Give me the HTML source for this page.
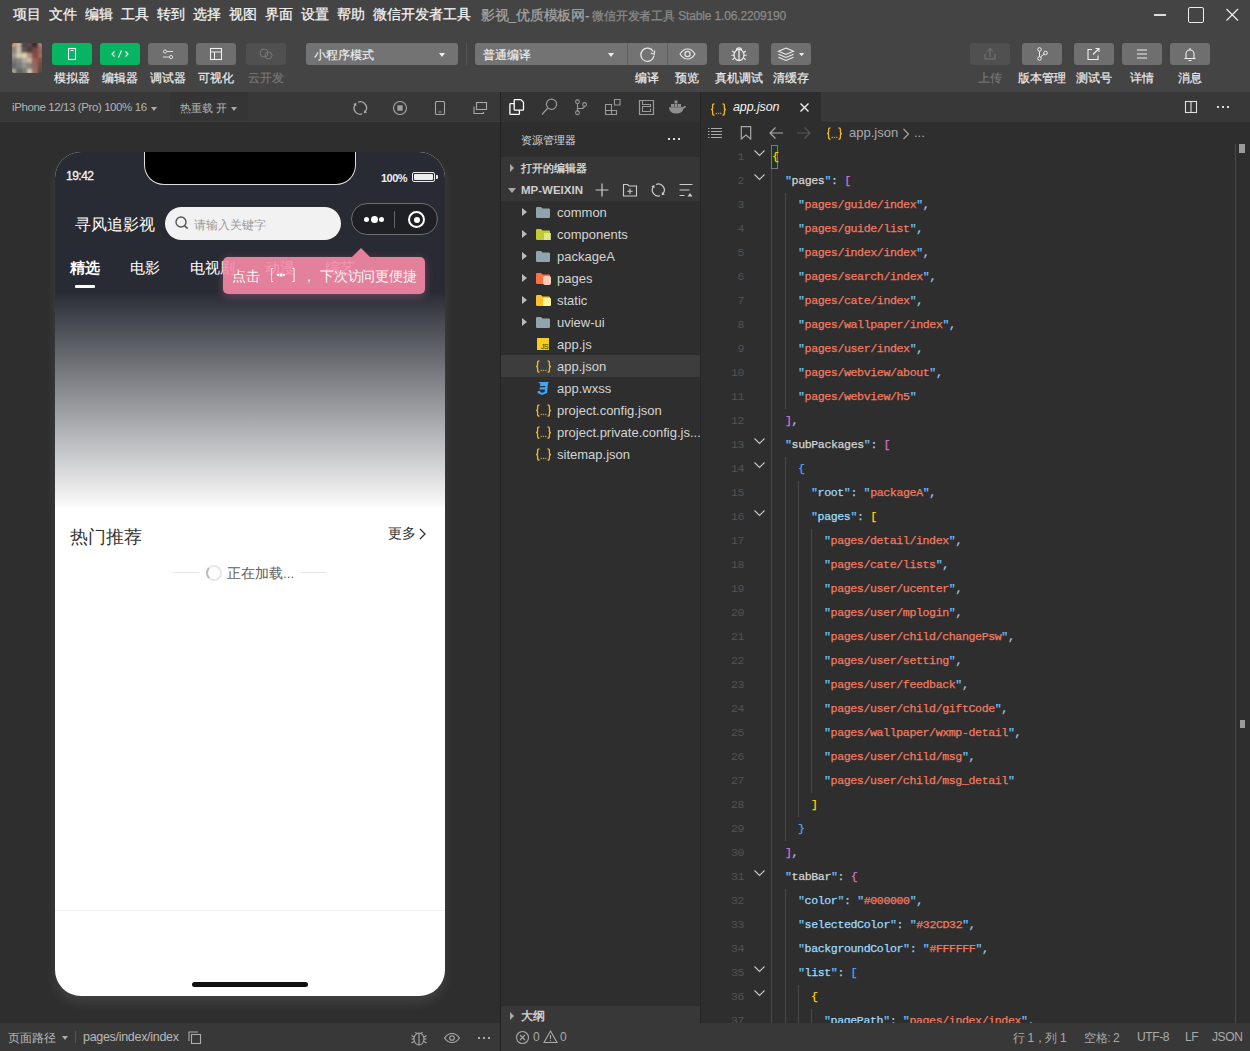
<!DOCTYPE html>
<html><head><meta charset="utf-8">
<style>
*{box-sizing:border-box;margin:0;padding:0}
html,body{width:1250px;height:1051px;overflow:hidden;background:#2e2e2e;font-family:"Liberation Sans",sans-serif;}
.a{position:absolute}
svg{display:block;overflow:visible}
.ln{left:714px;width:30px;text-align:right;font-family:"Liberation Mono",monospace;font-size:11.5px;line-height:24px;color:#525252;letter-spacing:-0.4px}
.code{font-family:"Liberation Mono",monospace;font-size:11.6px;line-height:24px;letter-spacing:-0.39px;-webkit-text-stroke:0.25px currentColor;white-space:pre}
.code i{font-style:normal;-webkit-text-stroke:0.25px currentColor}
.top{left:0;top:0;width:1250px;height:92px;background:#444}
.menu{top:6px;font-size:13.5px;color:#f4f4f4;white-space:nowrap;-webkit-text-stroke:0.25px currentColor}
.btn{top:43px;height:22px;width:40px;border-radius:3px;background:#6f6f6f}
.btn svg{position:absolute;left:0;top:0}
.lbl{top:70px;font-size:12px;color:#ececec;-webkit-text-stroke:0.2px currentColor;white-space:nowrap;text-align:center;width:80px}
.dd{top:43px;height:22px;border-radius:3px;background:#737373;font-size:12px;color:#f0f0f0;padding:4px 0 0 8px;-webkit-text-stroke:0.15px currentColor;white-space:nowrap}
.caret{position:absolute;width:0;height:0;border-left:3px solid transparent;border-right:3px solid transparent;border-top:4px solid #eee}
/* sim header */
.hdr{top:92px;height:30px;background:#353535}
</style></head><body>
<!-- top bar -->
<div class="a top"></div>
<div class="a menu" style="left:13px">项目</div>
<div class="a menu" style="left:49px">文件</div>
<div class="a menu" style="left:85px">编辑</div>
<div class="a menu" style="left:121px">工具</div>
<div class="a menu" style="left:157px">转到</div>
<div class="a menu" style="left:193px">选择</div>
<div class="a menu" style="left:229px">视图</div>
<div class="a menu" style="left:265px">界面</div>
<div class="a menu" style="left:301px">设置</div>
<div class="a menu" style="left:337px">帮助</div>
<div class="a menu" style="left:373px">微信开发者工具</div>
<div class="a menu" style="left:481px;color:#a4a4a4;font-size:13.5px;top:7px;letter-spacing:-0.2px">影视_优质模板网-</div>
<div class="a menu" style="left:592px;color:#8a8a8a;font-size:12px;top:8px;letter-spacing:-0.15px">微信开发者工具 Stable 1.06.2209190</div>
<!-- window controls -->
<div class="a" style="left:1154px;top:14px;width:12px;height:2px;background:#ddd"></div>
<div class="a" style="left:1188px;top:7px;width:16px;height:16px;border:1.7px solid #eee;border-radius:2px"></div>
<svg class="a" style="left:1226px;top:8px" width="13" height="13"><path d="M0.5 1L12 12.5M12 1L0.5 12.5" stroke="#eee" stroke-width="1.15"/></svg>

<!-- avatar -->
<div class="a" style="left:12px;top:43px;width:30px;height:30px;border-radius:2px;overflow:hidden"><svg width="30" height="30" style="filter:blur(1.2px);transform:scale(1.08)"><rect x="0" y="0" width="5" height="5" fill="#c49a7a"/><rect x="5" y="0" width="5" height="5" fill="#d7b89c"/><rect x="10" y="0" width="5" height="5" fill="#4e4a4a"/><rect x="15" y="0" width="5" height="5" fill="#5a4a48"/><rect x="20" y="0" width="5" height="5" fill="#3a2a2a"/><rect x="25" y="0" width="5" height="5" fill="#b08070"/><rect x="0" y="5" width="5" height="5" fill="#8a8580"/><rect x="5" y="5" width="5" height="5" fill="#cfc4b0"/><rect x="10" y="5" width="5" height="5" fill="#5b5655"/><rect x="15" y="5" width="5" height="5" fill="#4c3c3a"/><rect x="20" y="5" width="5" height="5" fill="#7a4a4a"/><rect x="25" y="5" width="5" height="5" fill="#9a6a60"/><rect x="0" y="10" width="5" height="5" fill="#a09890"/><rect x="5" y="10" width="5" height="5" fill="#d8ccb0"/><rect x="10" y="10" width="5" height="5" fill="#e0d0b0"/><rect x="15" y="10" width="5" height="5" fill="#b09080"/><rect x="20" y="10" width="5" height="5" fill="#8a4a48"/><rect x="25" y="10" width="5" height="5" fill="#a06a5a"/><rect x="0" y="15" width="5" height="5" fill="#7a7a7a"/><rect x="5" y="15" width="5" height="5" fill="#8a8888"/><rect x="10" y="15" width="5" height="5" fill="#b0aca0"/><rect x="15" y="15" width="5" height="5" fill="#c8b8a0"/><rect x="20" y="15" width="5" height="5" fill="#a06058"/><rect x="25" y="15" width="5" height="5" fill="#805048"/><rect x="0" y="20" width="5" height="5" fill="#6a6a6a"/><rect x="5" y="20" width="5" height="5" fill="#807e7e"/><rect x="10" y="20" width="5" height="5" fill="#9a9690"/><rect x="15" y="20" width="5" height="5" fill="#8a8080"/><rect x="20" y="20" width="5" height="5" fill="#a06a60"/><rect x="25" y="20" width="5" height="5" fill="#6a5048"/><rect x="0" y="25" width="5" height="5" fill="#b0a898"/><rect x="5" y="25" width="5" height="5" fill="#666"/><rect x="10" y="25" width="5" height="5" fill="#7a7a74"/><rect x="15" y="25" width="5" height="5" fill="#d0c8b0"/><rect x="20" y="25" width="5" height="5" fill="#a07060"/><rect x="25" y="25" width="5" height="5" fill="#5a4a40"/></svg></div>
<!-- simulator buttons -->
<div class="a btn" style="left:52px;background:#07b462"><svg width="40" height="22"><rect x="16.5" y="5.5" width="7" height="11" fill="none" stroke="#fff" stroke-width="1.1"/><line x1="18.5" y1="7.5" x2="21.5" y2="7.5" stroke="#fff" stroke-width="1"/></svg></div>
<div class="a lbl" style="left:32px">模拟器</div>
<div class="a btn" style="left:100px;background:#07b462"><svg width="40" height="22"><path d="M14.5 8.5L12 11l2.5 2.5M25.5 8.5L28 11l-2.5 2.5M21.5 7.5l-3 7" fill="none" stroke="#fff" stroke-width="1.1"/></svg></div>
<div class="a lbl" style="left:80px">编辑器</div>
<div class="a btn" style="left:148px"><svg width="40" height="22"><line x1="15" y1="8.5" x2="25" y2="8.5" stroke="#ddd" stroke-width="1"/><line x1="15" y1="14" x2="25" y2="14" stroke="#ddd" stroke-width="1"/><circle cx="17" cy="8.5" r="1.6" fill="#6c6c6c" stroke="#ddd"/><circle cx="23" cy="14" r="1.6" fill="#6c6c6c" stroke="#ddd"/></svg></div>
<div class="a lbl" style="left:128px">调试器</div>
<div class="a btn" style="left:196px"><svg width="40" height="22"><rect x="14.5" y="5.5" width="11" height="11" fill="none" stroke="#eee" stroke-width="1.1"/><line x1="14.5" y1="9" x2="25.5" y2="9" stroke="#eee" stroke-width="1"/><line x1="18.5" y1="9" x2="18.5" y2="16.5" stroke="#eee" stroke-width="1"/></svg></div>
<div class="a lbl" style="left:176px">可视化</div>
<div class="a btn" style="left:246px;background:#505050"><svg width="40" height="22"><circle cx="18" cy="10" r="4" fill="none" stroke="#777" stroke-width="1"/><circle cx="22.5" cy="12.5" r="3.5" fill="none" stroke="#777" stroke-width="1"/></svg></div>
<div class="a lbl" style="left:226px;color:#777">云开发</div>

<!-- mode dropdown -->
<div class="a dd" style="left:306px;width:152px">小程序模式<span class="caret" style="left:133px;top:10px"></span></div>
<div class="a" style="left:466px;top:43px;width:1px;height:22px;background:#555"></div>
<div class="a dd" style="left:475px;width:232px">普通编译<span class="caret" style="left:133px;top:10px"></span></div>
<div class="a" style="left:627px;top:43px;width:1px;height:22px;background:#5e5e5e"></div>
<div class="a" style="left:667px;top:43px;width:1px;height:22px;background:#5e5e5e"></div>
<svg class="a" style="left:627px;top:43px" width="40" height="22"><path d="M26.2 8.5A6.6 6.6 0 1 0 27 12.5" fill="none" stroke="#e8e8e8" stroke-width="1.2"/><path d="M27.6 7.6l-.4 3.6-3.4-1.2" fill="none" stroke="#e8e8e8" stroke-width="1.2"/></svg>
<svg class="a" style="left:667px;top:43px" width="40" height="22"><path d="M13 11c2.1-3.3 4.6-5 7.5-5s5.4 1.7 7.5 5c-2.1 3.3-4.6 5-7.5 5s-5.4-1.7-7.5-5z" fill="none" stroke="#e8e8e8" stroke-width="1.2"/><circle cx="20.5" cy="11" r="2.6" fill="none" stroke="#e8e8e8" stroke-width="1.2"/></svg>
<div class="a lbl" style="left:607px">编译</div>
<div class="a lbl" style="left:647px">预览</div>
<div class="a btn" style="left:719px"><svg width="40" height="22"><path d="M17.5 7.2a2.5 2.3 0 0 1 5 0" fill="none" stroke="#eee" stroke-width="1.2"/><ellipse cx="20" cy="12" rx="5" ry="5.6" fill="none" stroke="#eee" stroke-width="1.2"/><line x1="20" y1="7" x2="20" y2="17.5" stroke="#eee" stroke-width="1.3"/><path d="M15.2 9.5l-2-1.5M24.8 9.5l2-1.5M15 12.3h-2.6M25 12.3h2.6M15.4 15l-2 1.8M24.6 15l2 1.8" stroke="#eee" stroke-width="1.1"/></svg></div>
<div class="a lbl" style="left:699px">真机调试</div>
<div class="a btn" style="left:771px"><svg width="40" height="22"><path d="M7.5 8.2l7.5-3.2 7.5 3.2-7.5 3.2z" fill="none" stroke="#eee" stroke-width="1.1"/><path d="M7.5 11.2l7.5 3.2 7.5-3.2M7.5 14.2l7.5 3.2 7.5-3.2" fill="none" stroke="#eee" stroke-width="1.1"/><path d="M28 10h5.2l-2.6 3.2z" fill="#eee"/></svg></div>
<div class="a lbl" style="left:751px">清缓存</div>

<!-- right buttons -->
<div class="a btn" style="left:970px;background:#505050"><svg width="40" height="22"><path d="M15 11v5h10v-5" fill="none" stroke="#777" stroke-width="1"/><path d="M20 14V5.5M17 8.5l3-3 3 3" fill="none" stroke="#777" stroke-width="1"/></svg></div>
<div class="a lbl" style="left:950px;color:#777">上传</div>
<div class="a btn" style="left:1022px"><svg width="40" height="22"><circle cx="17.5" cy="6.5" r="1.8" fill="none" stroke="#eee"/><circle cx="17.5" cy="15.5" r="1.8" fill="none" stroke="#eee"/><circle cx="23.5" cy="10" r="1.8" fill="none" stroke="#eee"/><path d="M17.5 8.3v5.4M22 11l-3.5 3" fill="none" stroke="#eee"/></svg></div>
<div class="a lbl" style="left:1002px">版本管理</div>
<div class="a btn" style="left:1074px"><svg width="40" height="22"><path d="M18 6.5h-4v10h10v-4" fill="none" stroke="#eee" stroke-width="1.1"/><path d="M19 11.5l6-6M21.5 5.5h3.5v3.5" fill="none" stroke="#eee" stroke-width="1.1"/></svg></div>
<div class="a lbl" style="left:1054px">测试号</div>
<div class="a btn" style="left:1122px"><svg width="40" height="22"><path d="M15 7h10M15 11h10M15 15h10" stroke="#eee" stroke-width="1.1"/></svg></div>
<div class="a lbl" style="left:1102px">详情</div>
<div class="a btn" style="left:1170px"><svg width="40" height="22"><path d="M16 15.5V11a4 4 0 0 1 8 0v4.5zM14.5 15.5h11M20 5v1.5M18.5 17.5h3" fill="none" stroke="#eee" stroke-width="1.1"/></svg></div>
<div class="a lbl" style="left:1150px">消息</div>


<!-- ===== SIMULATOR PANEL ===== -->
<div class="a" style="left:0;top:92px;width:500px;height:30px;background:#383838;border-bottom:1px solid #3e3e3e"></div>
<div class="a" style="left:170px;top:92px;width:78px;height:29px;background:#353535"></div>
<div class="a" style="left:12px;top:101px;font-size:11.5px;color:#b4b4b4;white-space:nowrap;letter-spacing:-0.4px">iPhone 12/13 (Pro) 100% 16</div>
<span class="a caret" style="left:151px;top:107px;border-top-color:#aaa"></span>
<div class="a" style="left:180px;top:101px;font-size:11px;color:#b4b4b4;white-space:nowrap">热重载 开</div>
<span class="a caret" style="left:231px;top:107px;border-top-color:#aaa"></span>
<svg class="a" style="left:350px;top:98px" width="20" height="20"><path d="M7.98 4.25A6.2 6.2 0 0 1 15.19 13.82 M12.22 15.90A6.2 6.2 0 0 1 5.10 6.62" fill="none" stroke="#a8a8a8" stroke-width="1.3"/><path d="M13.83 15.55L17.05 14.51L14.06 12.17Z M6.30 4.78L3.18 6.09L6.37 8.16Z" fill="#a8a8a8"/></svg>
<svg class="a" style="left:390px;top:98px" width="20" height="20"><circle cx="10" cy="10" r="6.5" fill="none" stroke="#a8a8a8" stroke-width="1.1"/><rect x="7.3" y="7.3" width="5.4" height="5.4" fill="#a0a0a0"/></svg>
<svg class="a" style="left:430px;top:98px" width="20" height="20"><rect x="5.5" y="3.5" width="9" height="13" rx="1" fill="none" stroke="#a8a8a8" stroke-width="1.1"/><line x1="8.5" y1="14" x2="11.5" y2="14" stroke="#a8a8a8"/></svg>
<svg class="a" style="left:470px;top:98px" width="20" height="20"><rect x="6.5" y="4.5" width="10" height="7" fill="none" stroke="#a8a8a8" stroke-width="1.1"/><path d="M4 8.5v7h9.5v-1.5" fill="none" stroke="#a8a8a8" stroke-width="1.1"/></svg>
<div class="a" style="left:500px;top:92px;width:1px;height:959px;background:#222"></div>

<!-- phone -->
<div class="a" style="left:55px;top:152px;width:390px;height:844px;border-radius:26px;overflow:hidden;background:#fff;box-shadow:0 7px 12px rgba(255,255,255,.09)">
  <div class="a" style="left:0;top:0;width:390px;height:140px;background:#282b34"></div>
  <div class="a" style="left:0;top:139px;width:390px;height:216px;background:linear-gradient(#282b34 0%,#fbfbfb 100%)"></div>
  <div class="a" style="left:0;top:758px;width:390px;height:1px;background:#f0f0f0"></div>
  <div class="a" style="left:137px;top:830px;width:116px;height:5px;border-radius:3px;background:#111"></div>
  <!-- notch -->
  <div class="a" style="left:89px;top:-2px;width:212px;height:35px;background:#000;border:1px solid #ddd;border-top:none;border-radius:0 0 20px 20px"></div>
  <div class="a" style="left:11px;top:17px;font-size:12px;color:#f4f4f4;letter-spacing:-0.5px;-webkit-text-stroke:0.3px #f4f4f4">19:42</div>
  <div class="a" style="left:326px;top:20px;font-size:11px;font-weight:bold;color:#eee;letter-spacing:-0.5px">100%</div>
  <div class="a" style="left:357px;top:20px;width:23px;height:10px;border:1.2px solid #eee;border-radius:2px;padding:1px"><div style="width:100%;height:100%;background:#eee;border-radius:1px"></div></div>
  <div class="a" style="left:381px;top:23px;width:2px;height:4px;background:#eee;border-radius:0 1px 1px 0"></div>
  <!-- nav -->
  <div class="a" style="left:20px;top:63px;font-size:16px;color:#fff;white-space:nowrap">寻风追影视</div>
  <div class="a" style="left:110px;top:55px;width:176px;height:33px;border-radius:17px;background:#f2f2f2"></div>
  <svg class="a" style="left:119px;top:63px" width="16" height="16"><circle cx="7" cy="7" r="5" fill="none" stroke="#555" stroke-width="1.4"/><path d="M10.6 10.6l3 3" stroke="#555" stroke-width="1.5"/></svg>
  <div class="a" style="left:139px;top:65px;font-size:12px;color:#9a9a9a;white-space:nowrap">请输入关键字</div>
  <div class="a" style="left:296px;top:51px;width:87px;height:32px;border-radius:16px;background:#1f2025;border:1px solid #6e6e70"></div>
  <div class="a" style="left:309px;top:65px;width:5px;height:5px;border-radius:50%;background:#fff"></div>
  <div class="a" style="left:315.5px;top:64px;width:7px;height:7px;border-radius:50%;background:#fff"></div>
  <div class="a" style="left:324px;top:65px;width:5px;height:5px;border-radius:50%;background:#fff"></div>
  <div class="a" style="left:339px;top:59px;width:1px;height:17px;background:#666"></div>
  <div class="a" style="left:353px;top:59px;width:17px;height:17px;border-radius:50%;border:2.2px solid #fff"></div>
  <div class="a" style="left:358.5px;top:64.5px;width:6px;height:6px;border-radius:50%;background:#fff"></div>
  <!-- tabs -->
  <div class="a" style="left:15px;top:106.5px;font-size:15px;font-weight:bold;color:#fff;white-space:nowrap">精选</div>
  <div class="a" style="left:20px;top:133px;width:20px;height:3px;background:#fff;border-radius:1px"></div>
  <div class="a" style="left:75px;top:106.5px;font-size:15px;color:#fff;white-space:nowrap">电影</div>
  <div class="a" style="left:135px;top:106.5px;font-size:15px;color:#fff;white-space:nowrap">电视剧</div>
  <div class="a" style="left:210px;top:106.5px;font-size:15px;color:#fff;white-space:nowrap">动漫</div>
  <div class="a" style="left:270px;top:106.5px;font-size:15px;color:#fff;white-space:nowrap">综艺</div>
  <!-- tooltip -->
  <div class="a" style="left:297px;top:96px;width:0;height:0;border-left:9px solid transparent;border-right:9px solid transparent;border-bottom:9px solid rgba(247,139,168,.9)"></div>
  <div class="a" style="left:168px;top:105px;width:202px;height:37px;border-radius:5px;background:rgba(247,139,168,.9);box-shadow:0 2px 8px rgba(232,128,156,.35)"></div><div class="a" style="left:9px;top:0;width:390px;height:300px;color:#f6f6f6;font-size:13.5px;white-space:nowrap"><span class="a" style="left:168px;top:116px">点击</span><span class="a" style="left:206px;top:114px;font-size:14px;transform:scaleX(.7)">[</span><span class="a" style="left:213px;top:122px;width:2px;height:2px;background:#f6f6f6;box-shadow:3px 0 0 .5px #f6f6f6,6px 0 #f6f6f6"></span><span class="a" style="left:228px;top:114px;font-size:14px;transform:scaleX(.7)">]</span><span class="a" style="left:238px;top:116px">，</span><span class="a" style="left:256px;top:116px;letter-spacing:-0.2px">下次访问更便捷</span></div>
  <!-- hot -->
  <div class="a" style="left:15px;top:373px;font-size:18px;color:#333;white-space:nowrap">热门推荐</div>
  <div class="a" style="left:333px;top:373px;font-size:14px;color:#333;white-space:nowrap">更多</div>
  <svg class="a" style="left:363px;top:375px" width="10" height="14"><path d="M2 2l5 5-5 5" fill="none" stroke="#333" stroke-width="1.3"/></svg>
  <div class="a" style="left:118px;top:420px;width:26px;height:1px;background:#e6e6e6"></div>
  <div class="a" style="left:245px;top:420px;width:26px;height:1px;background:#e6e6e6"></div>
  <div class="a" style="left:151px;top:413px;width:16px;height:16px;border-radius:50%;border:2px solid #e8e8e8;border-left-color:#bbb"></div>
  <div class="a" style="left:172px;top:413px;font-size:13.5px;color:#5e5e5e;white-space:nowrap">正在加载...</div>
</div>

<!-- sim bottom bar -->
<div class="a" style="left:0;top:1023px;width:500px;height:28px;background:#383838"></div>
<div class="a" style="left:8px;top:1030px;font-size:12px;color:#b8b8b8;white-space:nowrap">页面路径</div>
<span class="a caret" style="left:62px;top:1036px;border-top-color:#aaa"></span>
<div class="a" style="left:75px;top:1031px;width:1px;height:12px;background:#555"></div>
<div class="a" style="left:83px;top:1030px;font-size:12.5px;letter-spacing:-0.3px;color:#b8b8b8;white-space:nowrap">pages/index/index</div>
<svg class="a" style="left:186px;top:1029px" width="16" height="16"><rect x="5.5" y="5.5" width="9" height="9" fill="none" stroke="#aaa" stroke-width="1.1"/><path d="M3 12V3h9" fill="none" stroke="#aaa" stroke-width="1.1"/></svg>
<svg class="a" style="left:410px;top:1030px" width="18" height="16"><ellipse cx="9" cy="9" rx="5" ry="6" fill="none" stroke="#aaa" stroke-width="1.1"/><path d="M9 3v12M6.5 3.5l-1-1.5M11.5 3.5l1-1.5M4 7l-2.5-1.5M14 7l2.5-1.5M4 9H1.5M14 9h2.5M4 11.5l-2.5 1.5M14 11.5l2.5 1.5" stroke="#aaa" stroke-width="1.1"/></svg>
<svg class="a" style="left:443px;top:1030px" width="18" height="16"><path d="M1.5 8c2-3 4.5-4.5 7.5-4.5s5.5 1.5 7.5 4.5c-2 3-4.5 4.5-7.5 4.5S3.5 11 1.5 8z" fill="none" stroke="#aaa" stroke-width="1.1"/><circle cx="9" cy="8" r="2.3" fill="none" stroke="#aaa" stroke-width="1.1"/></svg>
<div class="a" style="left:478px;top:1037px;width:2px;height:2px;background:#aaa;box-shadow:5px 0 #aaa,10px 0 #aaa"></div>


<!-- ===== EXPLORER ===== -->
<div class="a" style="left:501px;top:92px;width:199px;height:30px;background:#333"></div>
<div class="a" style="left:501px;top:122px;width:199px;height:901px;background:#2e2e2e"></div>
<svg class="a" style="left:508px;top:98px" width="18" height="18"><path d="M6.2 2.2Q6.2 1.6 6.8 1.6H12.8L15.5 4.3V11.6Q15.5 12.2 14.9 12.2H6.8Q6.2 12.2 6.2 11.6Z" fill="none" stroke="#fff" stroke-width="1.3"/><path d="M6.2 5.7H2.5Q1.9 5.7 1.9 6.3V15.7Q1.9 16.3 2.5 16.3H10.8Q11.4 16.3 11.4 15.7V12.2" fill="none" stroke="#fff" stroke-width="1.3"/></svg>
<svg class="a" style="left:541px;top:98px" width="18" height="18"><circle cx="10.5" cy="6.3" r="5.1" fill="none" stroke="#9a9a9a" stroke-width="1.2"/><path d="M6.9 9.9L1 16.5" stroke="#9a9a9a" stroke-width="1.3"/></svg>
<svg class="a" style="left:572px;top:98px" width="18" height="18"><circle cx="5.5" cy="3.8" r="1.9" fill="none" stroke="#9a9a9a" stroke-width="1.1"/><circle cx="5.5" cy="14.8" r="1.9" fill="none" stroke="#9a9a9a" stroke-width="1.1"/><circle cx="12.6" cy="6.5" r="1.9" fill="none" stroke="#9a9a9a" stroke-width="1.1"/><path d="M5.5 5.7v7.2M12.4 8.4Q12 10.5 9.5 10.5H5.5" fill="none" stroke="#9a9a9a" stroke-width="1.1"/></svg>
<svg class="a" style="left:604px;top:98px" width="18" height="18"><path d="M1.5 6.5h6v6h-6zM1.5 12.5h6v4h-6zM7.5 12.5h5v4h-5zM10.5 1.5h5.5v5.5h-5.5z" fill="none" stroke="#999" stroke-width="1.1"/></svg>
<svg class="a" style="left:638px;top:98px" width="18" height="18"><path d="M1.5 2.5h14v14h-14z" fill="none" stroke="#999" stroke-width="1.2"/><path d="M4.5 2.5v4h8v2h-8v5h8v-3" fill="none" stroke="#999" stroke-width="1.1"/></svg>
<svg class="a" style="left:668px;top:99px" width="20" height="16"><path d="M0.8 8.2H15Q16.3 6.6 18.2 7.3Q17.6 9.2 15.6 9.4Q14.2 14.6 8.2 14.6Q1.6 14.6 0.8 8.2Z" fill="#8f8f8f"/><path d="M3 5h3v3H3zM6.5 5h3v3h-3zM10 5h3v3h-3zM6.5 1.5h3v3h-3z" fill="#8f8f8f"/></svg>
<div class="a" style="left:521px;top:133px;font-size:11px;color:#d8d8d8;white-space:nowrap">资源管理器</div>
<div class="a" style="left:668px;top:138px;width:2px;height:2px;background:#ddd;box-shadow:5px 0 #ddd,10px 0 #ddd"></div>
<div class="a" style="left:501px;top:157px;width:199px;height:44px;background:#363636"></div>
<div class="a" style="left:510px;top:164px;width:0;height:0;border-top:4px solid transparent;border-bottom:4px solid transparent;border-left:4px solid #aaa"></div>
<div class="a" style="left:521px;top:161px;font-size:11px;font-weight:bold;color:#cfcfcf;white-space:nowrap">打开的编辑器</div>
<div class="a" style="left:508px;top:188px;width:0;height:0;border-left:4px solid transparent;border-right:4px solid transparent;border-top:5px solid #aaa"></div>
<div class="a" style="left:521px;top:184px;font-size:11.5px;font-weight:bold;color:#cfcfcf;white-space:nowrap">MP-WEIXIN</div>
<svg class="a" style="left:594px;top:182px" width="16" height="16"><path d="M8 1.5v13M1.5 8h13" stroke="#ccc" stroke-width="1.2"/></svg>
<svg class="a" style="left:622px;top:182px" width="16" height="16"><path d="M1.5 2.5h4l1.5 1.5h7.5v10h-13z" fill="none" stroke="#ccc" stroke-width="1.1"/><path d="M8 6.5v5.5M5.3 9.2h5.4" stroke="#ccc" stroke-width="1.1"/></svg>
<svg class="a" style="left:650px;top:182px" width="16" height="16"><path d="M6.05 2.44A6.0 6.0 0 0 1 13.03 11.69 M10.15 13.71A6.0 6.0 0 0 1 3.27 4.73" fill="none" stroke="#cfcfcf" stroke-width="1.2"/><path d="M11.74 13.34L14.89 12.39L11.90 10.05Z M4.41 2.98L1.35 4.20L4.53 6.27Z" fill="#cfcfcf"/></svg>
<svg class="a" style="left:678px;top:182px" width="16" height="16"><path d="M1.5 2.5h13M1.5 8h10M1.5 13.5h5" stroke="#ccc" stroke-width="1.2"/><path d="M9.5 14.5l2.5-3.5 2.5 3.5z" fill="#ccc"/></svg>
<div class="a" style="left:522px;top:208px;width:0;height:0;border-top:4px solid transparent;border-bottom:4px solid transparent;border-left:5px solid #bbb"></div>
<svg class="a" style="left:536px;top:207px" width="14" height="11"><path d="M0 1.2Q0 0 1.2 0H5L6.5 1.6H12.8Q14 1.6 14 2.8V9.8Q14 11 12.8 11H1.2Q0 11 0 9.8Z" fill="#90a4ae"/></svg>
<div class="a" style="left:557px;top:205px;font-size:13px;color:#d4d4d4;white-space:nowrap">common</div>
<div class="a" style="left:522px;top:230px;width:0;height:0;border-top:4px solid transparent;border-bottom:4px solid transparent;border-left:5px solid #bbb"></div>
<svg class="a" style="left:536px;top:229px" width="14" height="11"><path d="M0 1.2Q0 0 1.2 0H5L6.5 1.6H12.8Q14 1.6 14 2.8V9.8Q14 11 12.8 11H1.2Q0 11 0 9.8Z" fill="#c0ca33"/></svg>
<div class="a" style="left:544px;top:233px;width:7px;height:7px;background:#e6ee9c;opacity:.8"></div>
<div class="a" style="left:557px;top:227px;font-size:13px;color:#d4d4d4;white-space:nowrap">components</div>
<div class="a" style="left:522px;top:252px;width:0;height:0;border-top:4px solid transparent;border-bottom:4px solid transparent;border-left:5px solid #bbb"></div>
<svg class="a" style="left:536px;top:251px" width="14" height="11"><path d="M0 1.2Q0 0 1.2 0H5L6.5 1.6H12.8Q14 1.6 14 2.8V9.8Q14 11 12.8 11H1.2Q0 11 0 9.8Z" fill="#90a4ae"/></svg>
<div class="a" style="left:557px;top:249px;font-size:13px;color:#d4d4d4;white-space:nowrap">packageA</div>
<div class="a" style="left:522px;top:274px;width:0;height:0;border-top:4px solid transparent;border-bottom:4px solid transparent;border-left:5px solid #bbb"></div>
<svg class="a" style="left:536px;top:273px" width="14" height="11"><path d="M0 1.2Q0 0 1.2 0H5L6.5 1.6H12.8Q14 1.6 14 2.8V9.8Q14 11 12.8 11H1.2Q0 11 0 9.8Z" fill="#ff7043"/></svg>
<div class="a" style="left:543px;top:276px;width:8px;height:9px;border-radius:2px;background:#ffccbc"></div>
<div class="a" style="left:557px;top:271px;font-size:13px;color:#d4d4d4;white-space:nowrap">pages</div>
<div class="a" style="left:522px;top:296px;width:0;height:0;border-top:4px solid transparent;border-bottom:4px solid transparent;border-left:5px solid #bbb"></div>
<svg class="a" style="left:536px;top:295px" width="14" height="11"><path d="M0 1.2Q0 0 1.2 0H5L6.5 1.6H12.8Q14 1.6 14 2.8V9.8Q14 11 12.8 11H1.2Q0 11 0 9.8Z" fill="#fbc02d"/></svg>
<div class="a" style="left:543px;top:298px;width:8px;height:8px;border-radius:1px;background:#fff59d"></div>
<div class="a" style="left:557px;top:293px;font-size:13px;color:#d4d4d4;white-space:nowrap">static</div>
<div class="a" style="left:522px;top:318px;width:0;height:0;border-top:4px solid transparent;border-bottom:4px solid transparent;border-left:5px solid #bbb"></div>
<svg class="a" style="left:536px;top:317px" width="14" height="11"><path d="M0 1.2Q0 0 1.2 0H5L6.5 1.6H12.8Q14 1.6 14 2.8V9.8Q14 11 12.8 11H1.2Q0 11 0 9.8Z" fill="#90a4ae"/></svg>
<div class="a" style="left:557px;top:315px;font-size:13px;color:#d4d4d4;white-space:nowrap">uview-ui</div>
<div class="a" style="left:537px;top:338px;width:12px;height:12px;background:#f5cd1e"><span class="a" style="left:4px;top:5px;color:#3a3000;font-size:7px;line-height:7px;letter-spacing:-0.5px">JS</span></div>
<div class="a" style="left:557px;top:337px;font-size:13px;color:#d4d4d4;white-space:nowrap">app.js</div>
<div class="a" style="left:501px;top:355px;width:199px;height:22px;background:#3d3d3d"></div>
<svg class="a" style="left:535px;top:360px" width="17" height="13"><path d="M4.5 .8Q2.6 .8 2.6 2.6V5Q2.6 6.5 1 6.5Q2.6 6.5 2.6 8V10.4Q2.6 12.2 4.5 12.2M12.5 .8Q14.4 .8 14.4 2.6V5Q14.4 6.5 16 6.5Q14.4 6.5 14.4 8V10.4Q14.4 12.2 12.5 12.2" fill="none" stroke="#f2b82c" stroke-width="1.3"/><rect x="5.6" y="9.8" width="1.3" height="1.3" fill="#c9a23a"/><rect x="7.85" y="9.8" width="1.3" height="1.3" fill="#c9a23a"/><rect x="10.1" y="9.8" width="1.3" height="1.3" fill="#c9a23a"/></svg>
<div class="a" style="left:557px;top:359px;font-size:13px;color:#d4d4d4;white-space:nowrap">app.json</div>
<svg class="a" style="left:535.5px;top:381px" width="14" height="14"><path d="M2 1h11l-1 1.5L11 12l-5 2-4.5-2 .3-2h2.5l-.2 1 2 .8 2.5-.8.4-2.5H3.5l.4-2.3h5.3l.2-1.3H3.9l.4-2.2" fill="#42a5f5"/></svg>
<div class="a" style="left:557px;top:381px;font-size:13px;color:#d4d4d4;white-space:nowrap">app.wxss</div>
<svg class="a" style="left:535px;top:404px" width="17" height="13"><path d="M4.5 .8Q2.6 .8 2.6 2.6V5Q2.6 6.5 1 6.5Q2.6 6.5 2.6 8V10.4Q2.6 12.2 4.5 12.2M12.5 .8Q14.4 .8 14.4 2.6V5Q14.4 6.5 16 6.5Q14.4 6.5 14.4 8V10.4Q14.4 12.2 12.5 12.2" fill="none" stroke="#f2b82c" stroke-width="1.3"/><rect x="5.6" y="9.8" width="1.3" height="1.3" fill="#c9a23a"/><rect x="7.85" y="9.8" width="1.3" height="1.3" fill="#c9a23a"/><rect x="10.1" y="9.8" width="1.3" height="1.3" fill="#c9a23a"/></svg>
<div class="a" style="left:557px;top:403px;font-size:13px;color:#d4d4d4;white-space:nowrap">project.config.json</div>
<svg class="a" style="left:535px;top:426px" width="17" height="13"><path d="M4.5 .8Q2.6 .8 2.6 2.6V5Q2.6 6.5 1 6.5Q2.6 6.5 2.6 8V10.4Q2.6 12.2 4.5 12.2M12.5 .8Q14.4 .8 14.4 2.6V5Q14.4 6.5 16 6.5Q14.4 6.5 14.4 8V10.4Q14.4 12.2 12.5 12.2" fill="none" stroke="#f2b82c" stroke-width="1.3"/><rect x="5.6" y="9.8" width="1.3" height="1.3" fill="#c9a23a"/><rect x="7.85" y="9.8" width="1.3" height="1.3" fill="#c9a23a"/><rect x="10.1" y="9.8" width="1.3" height="1.3" fill="#c9a23a"/></svg>
<div class="a" style="left:557px;top:425px;font-size:13px;color:#d4d4d4;white-space:nowrap">project.private.config.js...</div>
<svg class="a" style="left:535px;top:448px" width="17" height="13"><path d="M4.5 .8Q2.6 .8 2.6 2.6V5Q2.6 6.5 1 6.5Q2.6 6.5 2.6 8V10.4Q2.6 12.2 4.5 12.2M12.5 .8Q14.4 .8 14.4 2.6V5Q14.4 6.5 16 6.5Q14.4 6.5 14.4 8V10.4Q14.4 12.2 12.5 12.2" fill="none" stroke="#f2b82c" stroke-width="1.3"/><rect x="5.6" y="9.8" width="1.3" height="1.3" fill="#c9a23a"/><rect x="7.85" y="9.8" width="1.3" height="1.3" fill="#c9a23a"/><rect x="10.1" y="9.8" width="1.3" height="1.3" fill="#c9a23a"/></svg>
<div class="a" style="left:557px;top:447px;font-size:13px;color:#d4d4d4;white-space:nowrap">sitemap.json</div>
<div class="a" style="left:501px;top:1006px;width:199px;height:17px;background:#383838"></div>
<div class="a" style="left:510px;top:1012px;width:0;height:0;border-top:4px solid transparent;border-bottom:4px solid transparent;border-left:4px solid #aaa"></div>
<div class="a" style="left:521px;top:1008px;font-size:12px;font-weight:bold;color:#cfcfcf;white-space:nowrap">大纲</div>
<div class="a" style="left:501px;top:1023px;width:749px;height:28px;background:#383838"></div>
<svg class="a" style="left:515px;top:1030px" width="15" height="15"><circle cx="7.5" cy="7.5" r="6" fill="none" stroke="#aaa" stroke-width="1.1"/><path d="M5 5l5 5M10 5l-5 5" stroke="#aaa" stroke-width="1.1"/></svg>
<div class="a" style="left:533px;top:1030px;font-size:12px;color:#aaa">0</div>
<svg class="a" style="left:543px;top:1029px" width="15" height="15"><path d="M7.5 2L14 13.5H1z" fill="none" stroke="#aaa" stroke-width="1.1"/><path d="M7.5 6v4M7.5 11.2v1" stroke="#aaa" stroke-width="1.1"/></svg>
<div class="a" style="left:560px;top:1030px;font-size:12px;color:#aaa">0</div>


<!-- ===== EDITOR ===== -->
<div class="a" style="left:700px;top:92px;width:1px;height:931px;background:#252525"></div>
<div class="a" style="left:701px;top:92px;width:549px;height:30px;background:#383838"></div>
<div class="a" style="left:701px;top:92px;width:120px;height:30px;background:#2e2e2e"></div>
<div class="a" style="left:701px;top:122px;width:549px;height:901px;background:#2e2e2e;overflow:hidden" id="ed"></div>
<svg class="a" style="left:710px;top:103px" width="17" height="13"><path d="M4.5 .8Q2.6 .8 2.6 2.6V5Q2.6 6.5 1 6.5Q2.6 6.5 2.6 8V10.4Q2.6 12.2 4.5 12.2M12.5 .8Q14.4 .8 14.4 2.6V5Q14.4 6.5 16 6.5Q14.4 6.5 14.4 8V10.4Q14.4 12.2 12.5 12.2" fill="none" stroke="#f2b82c" stroke-width="1.3"/><rect x="5.6" y="9.8" width="1.3" height="1.3" fill="#c9a23a"/><rect x="7.85" y="9.8" width="1.3" height="1.3" fill="#c9a23a"/><rect x="10.1" y="9.8" width="1.3" height="1.3" fill="#c9a23a"/></svg>
<div class="a" style="left:733px;top:100px;font-size:12.5px;letter-spacing:-0.1px;font-style:italic;color:#f2f2f2;white-space:nowrap">app.json</div>
<svg class="a" style="left:800px;top:103px" width="9" height="9"><path d="M.5 .5l8 8M8.5 .5l-8 8" stroke="#eee" stroke-width="1.4"/></svg>
<svg class="a" style="left:1184px;top:100px" width="14" height="14"><rect x="1.5" y="1.5" width="11" height="11" fill="none" stroke="#e0e0e0" stroke-width="1.1"/><line x1="7" y1="1.5" x2="7" y2="12.5" stroke="#e0e0e0" stroke-width="1.1"/></svg>
<div class="a" style="left:1217px;top:106px;width:2px;height:2px;background:#ddd;box-shadow:5px 0 #ddd,10px 0 #ddd"></div>
<svg class="a" style="left:707px;top:126px" width="16" height="14"><path d="M4 2.5h11M4 5.5h11M4 8.5h11M4 11.5h11" stroke="#aaa" stroke-width="1"/><path d="M1 2.5h1.5M1 5.5h1.5M1 8.5h1.5M1 11.5h1.5" stroke="#aaa" stroke-width="1"/></svg>
<svg class="a" style="left:740px;top:125px" width="12" height="16"><path d="M1.3 1.6h9.4v12.4L6 10 1.3 14z" fill="none" stroke="#a8a8a8" stroke-width="1.2"/></svg>
<svg class="a" style="left:768px;top:126px" width="16" height="14"><path d="M15 7H2M7.5 1.5L2 7l5.5 5.5" fill="none" stroke="#aaa" stroke-width="1.2"/></svg>
<svg class="a" style="left:796px;top:126px" width="16" height="14"><path d="M1 7h13M8.5 1.5L14 7l-5.5 5.5" fill="none" stroke="#555" stroke-width="1.2"/></svg>
<svg class="a" style="left:826px;top:127px" width="17" height="13"><path d="M4.5 .8Q2.6 .8 2.6 2.6V5Q2.6 6.5 1 6.5Q2.6 6.5 2.6 8V10.4Q2.6 12.2 4.5 12.2M12.5 .8Q14.4 .8 14.4 2.6V5Q14.4 6.5 16 6.5Q14.4 6.5 14.4 8V10.4Q14.4 12.2 12.5 12.2" fill="none" stroke="#f2b82c" stroke-width="1.3"/><rect x="5.6" y="9.8" width="1.3" height="1.3" fill="#c9a23a"/><rect x="7.85" y="9.8" width="1.3" height="1.3" fill="#c9a23a"/><rect x="10.1" y="9.8" width="1.3" height="1.3" fill="#c9a23a"/></svg>
<div class="a" style="left:849px;top:125px;font-size:13px;color:#aaa;white-space:nowrap">app.json</div>
<svg class="a" style="left:902px;top:128px" width="8" height="12"><path d="M1.5 1l5 5-5 5" fill="none" stroke="#aaa" stroke-width="1.1"/></svg>
<div class="a" style="left:914px;top:125px;font-size:13px;color:#aaa;white-space:nowrap">...</div>
<div class="a" style="left:771px;top:145px;width:7px;height:24px;border:1px solid #7a7a7a;background:#1f3322"></div>
<div class="a" style="left:1235px;top:144px;width:1px;height:879px;background:#4a4a4a"></div>
<div class="a" style="left:1239px;top:144px;width:6px;height:9px;background:#9a9a9a"></div>
<div class="a" style="left:1240px;top:720px;width:5px;height:8px;background:#9a9a9a"></div>
<div class="a" style="left:701px;top:144px;width:534px;height:879px;overflow:hidden">
<div class="a" style="left:-701px;top:-144px;width:1250px;height:1100px">
<div class="a" style="left:771px;top:168.5px;width:1px;height:864.0px;background:#484848"></div>
<div class="a" style="left:785px;top:192.5px;width:1px;height:216.0px;background:#484848"></div>
<div class="a" style="left:785px;top:456.5px;width:1px;height:384.0px;background:#484848"></div>
<div class="a" style="left:785px;top:888.5px;width:1px;height:144.0px;background:#484848"></div>
<div class="a" style="left:798px;top:480.5px;width:1px;height:336.0px;background:#484848"></div>
<div class="a" style="left:798px;top:984.5px;width:1px;height:48.0px;background:#484848"></div>
<div class="a" style="left:811px;top:528.5px;width:1px;height:264.0px;background:#484848"></div>
<div class="a" style="left:811px;top:1008.5px;width:1px;height:24.0px;background:#484848"></div>
<div class="a ln" style="top:144.5px">1</div>
<svg class="a" style="left:753.5px;top:148.5px" width="11" height="8"><path d="M0.5 1.5l5 5 5-5" fill="none" stroke="#c8c8c8" stroke-width="1.1"/></svg>
<div class="a code" style="left:772px;top:144.5px"><i style="color:#ffd700">{</i></div>
<div class="a ln" style="top:168.5px">2</div>
<svg class="a" style="left:753.5px;top:172.5px" width="11" height="8"><path d="M0.5 1.5l5 5 5-5" fill="none" stroke="#c8c8c8" stroke-width="1.1"/></svg>
<div class="a code" style="left:785px;top:168.5px"><i style="color:#6cc0f8">"</i><i style="color:#d4d4d4">pages</i><i style="color:#6cc0f8">"</i><i style="color:#a9c8e8">: </i><i style="color:#da70d6">[</i></div>
<div class="a ln" style="top:192.5px">3</div>
<div class="a code" style="left:798px;top:192.5px"><i style="color:#6cc0f8">"</i><i style="color:#f27a62">pages/guide/index</i><i style="color:#6cc0f8">"</i><i style="color:#a9c8e8">,</i></div>
<div class="a ln" style="top:216.5px">4</div>
<div class="a code" style="left:798px;top:216.5px"><i style="color:#6cc0f8">"</i><i style="color:#f27a62">pages/guide/list</i><i style="color:#6cc0f8">"</i><i style="color:#a9c8e8">,</i></div>
<div class="a ln" style="top:240.5px">5</div>
<div class="a code" style="left:798px;top:240.5px"><i style="color:#6cc0f8">"</i><i style="color:#f27a62">pages/index/index</i><i style="color:#6cc0f8">"</i><i style="color:#a9c8e8">,</i></div>
<div class="a ln" style="top:264.5px">6</div>
<div class="a code" style="left:798px;top:264.5px"><i style="color:#6cc0f8">"</i><i style="color:#f27a62">pages/search/index</i><i style="color:#6cc0f8">"</i><i style="color:#a9c8e8">,</i></div>
<div class="a ln" style="top:288.5px">7</div>
<div class="a code" style="left:798px;top:288.5px"><i style="color:#6cc0f8">"</i><i style="color:#f27a62">pages/cate/index</i><i style="color:#6cc0f8">"</i><i style="color:#a9c8e8">,</i></div>
<div class="a ln" style="top:312.5px">8</div>
<div class="a code" style="left:798px;top:312.5px"><i style="color:#6cc0f8">"</i><i style="color:#f27a62">pages/wallpaper/index</i><i style="color:#6cc0f8">"</i><i style="color:#a9c8e8">,</i></div>
<div class="a ln" style="top:336.5px">9</div>
<div class="a code" style="left:798px;top:336.5px"><i style="color:#6cc0f8">"</i><i style="color:#f27a62">pages/user/index</i><i style="color:#6cc0f8">"</i><i style="color:#a9c8e8">,</i></div>
<div class="a ln" style="top:360.5px">10</div>
<div class="a code" style="left:798px;top:360.5px"><i style="color:#6cc0f8">"</i><i style="color:#f27a62">pages/webview/about</i><i style="color:#6cc0f8">"</i><i style="color:#a9c8e8">,</i></div>
<div class="a ln" style="top:384.5px">11</div>
<div class="a code" style="left:798px;top:384.5px"><i style="color:#6cc0f8">"</i><i style="color:#f27a62">pages/webview/h5</i><i style="color:#6cc0f8">"</i></div>
<div class="a ln" style="top:408.5px">12</div>
<div class="a code" style="left:785px;top:408.5px"><i style="color:#da70d6">]</i><i style="color:#a9c8e8">,</i></div>
<div class="a ln" style="top:432.5px">13</div>
<svg class="a" style="left:753.5px;top:436.5px" width="11" height="8"><path d="M0.5 1.5l5 5 5-5" fill="none" stroke="#c8c8c8" stroke-width="1.1"/></svg>
<div class="a code" style="left:785px;top:432.5px"><i style="color:#6cc0f8">"</i><i style="color:#d4d4d4">subPackages</i><i style="color:#6cc0f8">"</i><i style="color:#a9c8e8">: </i><i style="color:#da70d6">[</i></div>
<div class="a ln" style="top:456.5px">14</div>
<svg class="a" style="left:753.5px;top:460.5px" width="11" height="8"><path d="M0.5 1.5l5 5 5-5" fill="none" stroke="#c8c8c8" stroke-width="1.1"/></svg>
<div class="a code" style="left:798px;top:456.5px"><i style="color:#4aa8f8">{</i></div>
<div class="a ln" style="top:480.5px">15</div>
<div class="a code" style="left:811px;top:480.5px"><i style="color:#6cc0f8">"</i><i style="color:#9cdcfe">root</i><i style="color:#6cc0f8">"</i><i style="color:#a9c8e8">: </i><i style="color:#6cc0f8">"</i><i style="color:#f27a62">packageA</i><i style="color:#6cc0f8">"</i><i style="color:#a9c8e8">,</i></div>
<div class="a ln" style="top:504.5px">16</div>
<svg class="a" style="left:753.5px;top:508.5px" width="11" height="8"><path d="M0.5 1.5l5 5 5-5" fill="none" stroke="#c8c8c8" stroke-width="1.1"/></svg>
<div class="a code" style="left:811px;top:504.5px"><i style="color:#6cc0f8">"</i><i style="color:#9cdcfe">pages</i><i style="color:#6cc0f8">"</i><i style="color:#a9c8e8">: </i><i style="color:#ffd700">[</i></div>
<div class="a ln" style="top:528.5px">17</div>
<div class="a code" style="left:824px;top:528.5px"><i style="color:#6cc0f8">"</i><i style="color:#f27a62">pages/detail/index</i><i style="color:#6cc0f8">"</i><i style="color:#a9c8e8">,</i></div>
<div class="a ln" style="top:552.5px">18</div>
<div class="a code" style="left:824px;top:552.5px"><i style="color:#6cc0f8">"</i><i style="color:#f27a62">pages/cate/lists</i><i style="color:#6cc0f8">"</i><i style="color:#a9c8e8">,</i></div>
<div class="a ln" style="top:576.5px">19</div>
<div class="a code" style="left:824px;top:576.5px"><i style="color:#6cc0f8">"</i><i style="color:#f27a62">pages/user/ucenter</i><i style="color:#6cc0f8">"</i><i style="color:#a9c8e8">,</i></div>
<div class="a ln" style="top:600.5px">20</div>
<div class="a code" style="left:824px;top:600.5px"><i style="color:#6cc0f8">"</i><i style="color:#f27a62">pages/user/mplogin</i><i style="color:#6cc0f8">"</i><i style="color:#a9c8e8">,</i></div>
<div class="a ln" style="top:624.5px">21</div>
<div class="a code" style="left:824px;top:624.5px"><i style="color:#6cc0f8">"</i><i style="color:#f27a62">pages/user/child/changePsw</i><i style="color:#6cc0f8">"</i><i style="color:#a9c8e8">,</i></div>
<div class="a ln" style="top:648.5px">22</div>
<div class="a code" style="left:824px;top:648.5px"><i style="color:#6cc0f8">"</i><i style="color:#f27a62">pages/user/setting</i><i style="color:#6cc0f8">"</i><i style="color:#a9c8e8">,</i></div>
<div class="a ln" style="top:672.5px">23</div>
<div class="a code" style="left:824px;top:672.5px"><i style="color:#6cc0f8">"</i><i style="color:#f27a62">pages/user/feedback</i><i style="color:#6cc0f8">"</i><i style="color:#a9c8e8">,</i></div>
<div class="a ln" style="top:696.5px">24</div>
<div class="a code" style="left:824px;top:696.5px"><i style="color:#6cc0f8">"</i><i style="color:#f27a62">pages/user/child/giftCode</i><i style="color:#6cc0f8">"</i><i style="color:#a9c8e8">,</i></div>
<div class="a ln" style="top:720.5px">25</div>
<div class="a code" style="left:824px;top:720.5px"><i style="color:#6cc0f8">"</i><i style="color:#f27a62">pages/wallpaper/wxmp-detail</i><i style="color:#6cc0f8">"</i><i style="color:#a9c8e8">,</i></div>
<div class="a ln" style="top:744.5px">26</div>
<div class="a code" style="left:824px;top:744.5px"><i style="color:#6cc0f8">"</i><i style="color:#f27a62">pages/user/child/msg</i><i style="color:#6cc0f8">"</i><i style="color:#a9c8e8">,</i></div>
<div class="a ln" style="top:768.5px">27</div>
<div class="a code" style="left:824px;top:768.5px"><i style="color:#6cc0f8">"</i><i style="color:#f27a62">pages/user/child/msg_detail</i><i style="color:#6cc0f8">"</i></div>
<div class="a ln" style="top:792.5px">28</div>
<div class="a code" style="left:811px;top:792.5px"><i style="color:#ffd700">]</i></div>
<div class="a ln" style="top:816.5px">29</div>
<div class="a code" style="left:798px;top:816.5px"><i style="color:#4aa8f8">}</i></div>
<div class="a ln" style="top:840.5px">30</div>
<div class="a code" style="left:785px;top:840.5px"><i style="color:#da70d6">]</i><i style="color:#a9c8e8">,</i></div>
<div class="a ln" style="top:864.5px">31</div>
<svg class="a" style="left:753.5px;top:868.5px" width="11" height="8"><path d="M0.5 1.5l5 5 5-5" fill="none" stroke="#c8c8c8" stroke-width="1.1"/></svg>
<div class="a code" style="left:785px;top:864.5px"><i style="color:#6cc0f8">"</i><i style="color:#d4d4d4">tabBar</i><i style="color:#6cc0f8">"</i><i style="color:#a9c8e8">: </i><i style="color:#da70d6">{</i></div>
<div class="a ln" style="top:888.5px">32</div>
<div class="a code" style="left:798px;top:888.5px"><i style="color:#6cc0f8">"</i><i style="color:#9cdcfe">color</i><i style="color:#6cc0f8">"</i><i style="color:#a9c8e8">: </i><i style="color:#6cc0f8">"</i><i style="color:#f27a62">#000000</i><i style="color:#6cc0f8">"</i><i style="color:#a9c8e8">,</i></div>
<div class="a ln" style="top:912.5px">33</div>
<div class="a code" style="left:798px;top:912.5px"><i style="color:#6cc0f8">"</i><i style="color:#9cdcfe">selectedColor</i><i style="color:#6cc0f8">"</i><i style="color:#a9c8e8">: </i><i style="color:#6cc0f8">"</i><i style="color:#f27a62">#32CD32</i><i style="color:#6cc0f8">"</i><i style="color:#a9c8e8">,</i></div>
<div class="a ln" style="top:936.5px">34</div>
<div class="a code" style="left:798px;top:936.5px"><i style="color:#6cc0f8">"</i><i style="color:#9cdcfe">backgroundColor</i><i style="color:#6cc0f8">"</i><i style="color:#a9c8e8">: </i><i style="color:#6cc0f8">"</i><i style="color:#f27a62">#FFFFFF</i><i style="color:#6cc0f8">"</i><i style="color:#a9c8e8">,</i></div>
<div class="a ln" style="top:960.5px">35</div>
<svg class="a" style="left:753.5px;top:964.5px" width="11" height="8"><path d="M0.5 1.5l5 5 5-5" fill="none" stroke="#c8c8c8" stroke-width="1.1"/></svg>
<div class="a code" style="left:798px;top:960.5px"><i style="color:#6cc0f8">"</i><i style="color:#9cdcfe">list</i><i style="color:#6cc0f8">"</i><i style="color:#a9c8e8">: </i><i style="color:#4aa8f8">[</i></div>
<div class="a ln" style="top:984.5px">36</div>
<svg class="a" style="left:753.5px;top:988.5px" width="11" height="8"><path d="M0.5 1.5l5 5 5-5" fill="none" stroke="#c8c8c8" stroke-width="1.1"/></svg>
<div class="a code" style="left:811px;top:984.5px"><i style="color:#ffd700">{</i></div>
<div class="a ln" style="top:1008.5px">37</div>
<div class="a code" style="left:824px;top:1008.5px"><i style="color:#6cc0f8">"</i><i style="color:#9cdcfe">pagePath</i><i style="color:#6cc0f8">"</i><i style="color:#a9c8e8">: </i><i style="color:#6cc0f8">"</i><i style="color:#f27a62">pages/index/index</i><i style="color:#6cc0f8">"</i><i style="color:#a9c8e8">,</i></div>
</div></div>
<div class="a" style="left:1013px;top:1030px;font-size:12px;letter-spacing:-0.4px;color:#aaa;white-space:nowrap">行 1，列 1</div>
<div class="a" style="left:1084px;top:1030px;font-size:12px;letter-spacing:-0.4px;color:#aaa;white-space:nowrap">空格: 2</div>
<div class="a" style="left:1137px;top:1030px;font-size:12px;letter-spacing:-0.4px;color:#aaa;white-space:nowrap">UTF-8</div>
<div class="a" style="left:1185px;top:1030px;font-size:12px;letter-spacing:-0.4px;color:#aaa;white-space:nowrap">LF</div>
<div class="a" style="left:1212px;top:1030px;font-size:12px;letter-spacing:-0.4px;color:#aaa;white-space:nowrap">JSON</div>

</body></html>
